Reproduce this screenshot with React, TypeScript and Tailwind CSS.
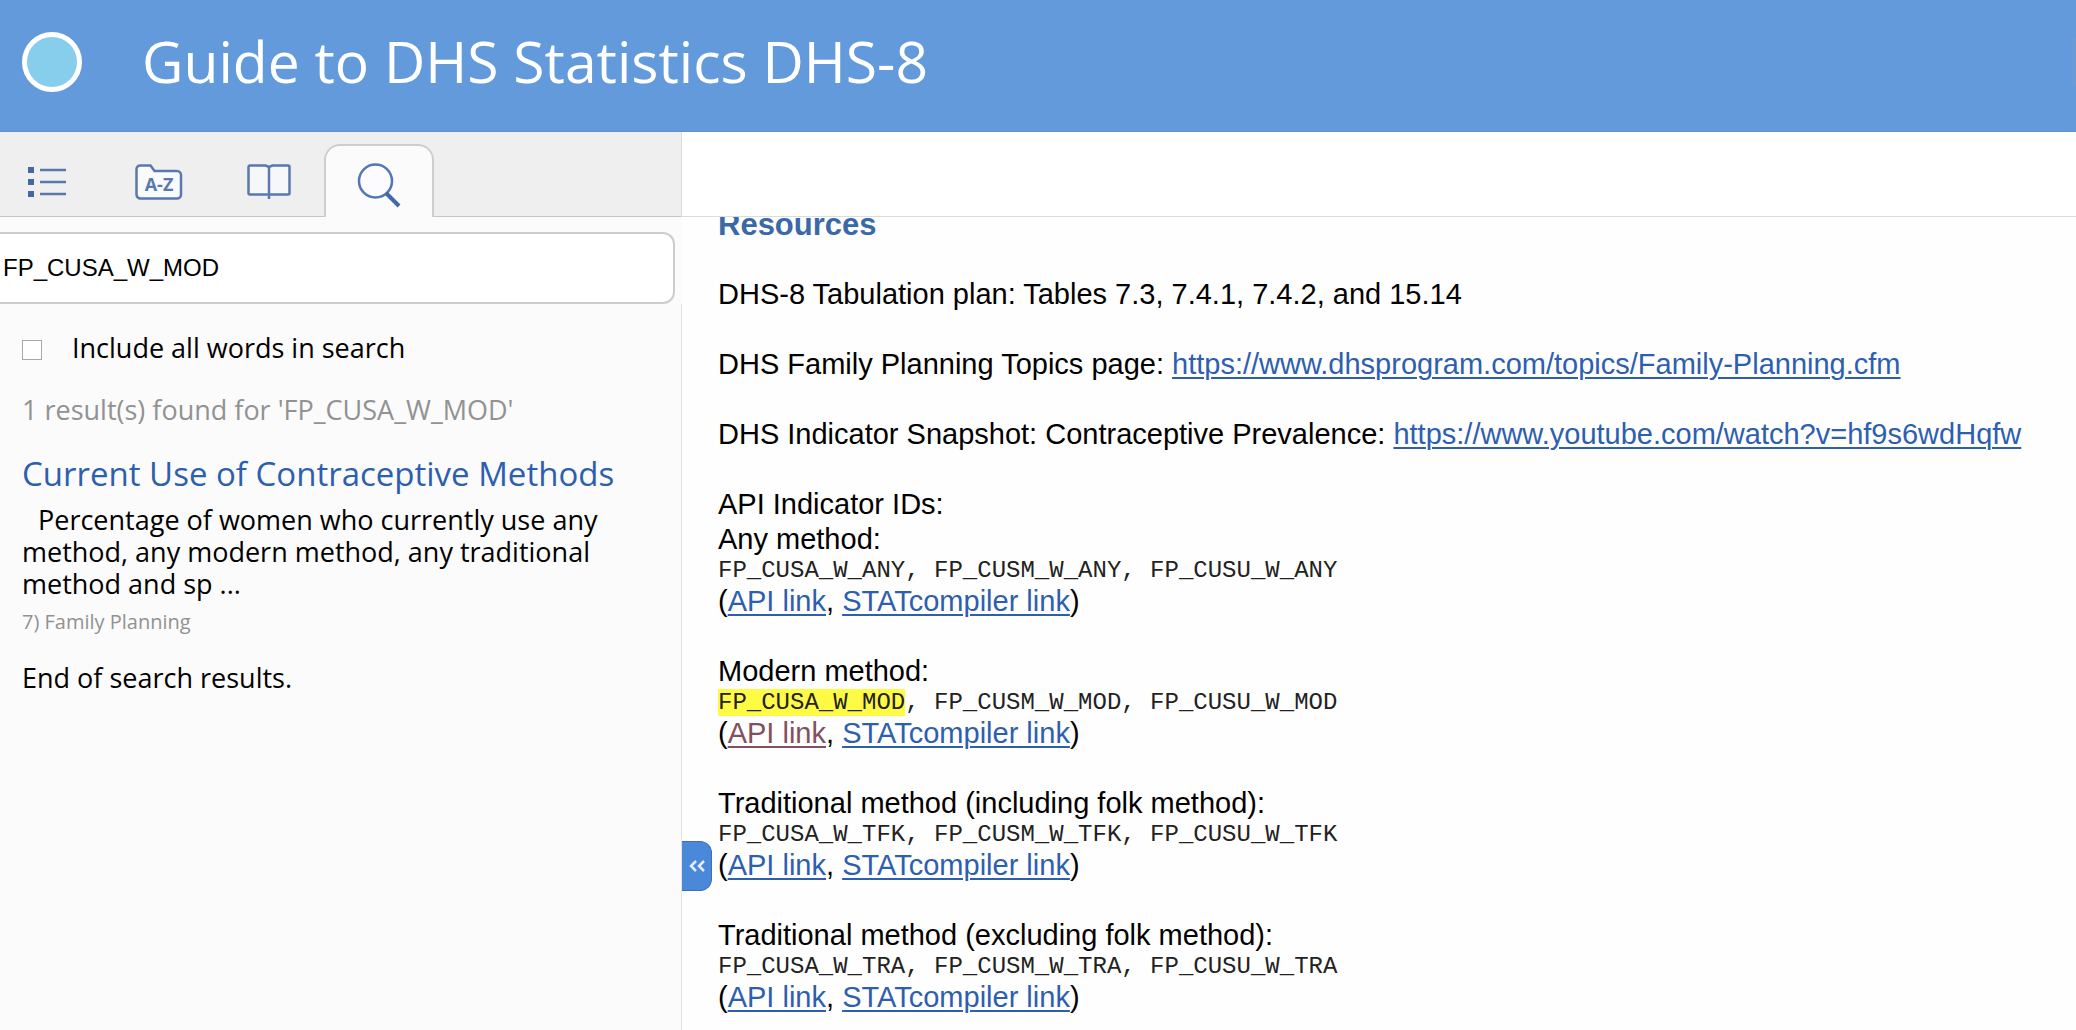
import React from 'react';

const groups = [
  { title: 'Any method:', suffix: 'ANY' },
  { title: 'Modern method:', suffix: 'MOD', highlighted: true, visited: true },
  { title: 'Traditional method (including folk method):', suffix: 'TFK' },
  { title: 'Traditional method (excluding folk method):', suffix: 'TRA' },
];

function ContentsIcon() {
  return (
    <svg width="42" height="36" viewBox="0 0 42 36" aria-hidden="true">
      <g fill="#4468a4">
        <rect x="2" y="3" width="6" height="6" />
        <rect x="2" y="15" width="6" height="6" />
        <rect x="2" y="27" width="6" height="6" />
      </g>
      <path d="M14 6h26M14 18h26M14 30h26" stroke="#5878ae" strokeWidth="2.500" />
    </svg>
  );
}

function IndexIcon() {
  return (
    <svg width="48" height="36" viewBox="0 0 48 36" aria-hidden="true">
      <path
        d="M5 1.500h10.500l4 5.500H42a4 4 0 0 1 4 4v19.500a4 4 0 0 1-4 4H5.500a4 4 0 0 1-4-4V5a3.500 3.500 0 0 1 3.500-3.500Z"
        fill="#f8fafc"
        stroke="#5878ae"
        strokeWidth="2.500"
      />
      <text x="24" y="27" textAnchor="middle" fontSize="18" fontWeight="700" fill="#5878ae" fontFamily="Open Sans, sans-serif">
        A-Z
      </text>
    </svg>
  );
}

function GlossaryIcon() {
  return (
    <svg width="44" height="36" viewBox="0 0 44 36" aria-hidden="true">
      <path
        d="M3 1.500h15.500l3.500 1.500 3.500-1.500H41a1.500 1.500 0 0 1 1.500 1.500v26a1.500 1.500 0 0 1-1.500 1.500H3A1.500 1.500 0 0 1 1.500 29V3A1.500 1.500 0 0 1 3 1.500Z"
        fill="#f5f7f9"
        stroke="#5878ae"
        strokeWidth="2.500"
      />
      <path d="M22 3v32" stroke="#5878ae" strokeWidth="2.500" />
    </svg>
  );
}

function SearchIcon() {
  return (
    <svg width="44" height="46" viewBox="0 0 44 46" aria-hidden="true">
      <circle cx="18.500" cy="18" r="16.500" fill="#fcfcfe" stroke="#5476b4" strokeWidth="2.500" />
      <path d="M29 30l13 13" stroke="#3f69a8" strokeWidth="4" />
    </svg>
  );
}

function TextLink({ visited, children }: { visited?: boolean; children: React.ReactNode }) {
  return (
    <a
      href="#"
      className={
        visited
          ? 'text-[#82505e] underline decoration-2 underline-offset-3'
          : 'text-[#2d5fae] underline decoration-2 underline-offset-3'
      }
    >
      {children}
    </a>
  );
}

export default function App() {
  return (
    <div className="flex h-screen flex-col overflow-hidden bg-white font-['Open_Sans','Trebuchet_MS',sans-serif] font-medium text-black">
      <header className="flex h-[132px] shrink-0 items-center border-b border-[#5f93cc] bg-[#629adc] pb-2 pl-[22px]">
        <div className="size-[60px] shrink-0 rounded-full border-[5px] border-white bg-[#87cdec]" />
        <h1 className="ml-[60px] flex-1 text-[57px] leading-none font-medium whitespace-nowrap text-white">
          Guide to DHS Statistics DHS-8
        </h1>
        <div className="h-12 w-1 bg-[#6c9bd4]" />
      </header>

      <div className="flex min-h-0 flex-1">
        <aside className="flex w-[682px] shrink-0 flex-col bg-[#fbfbfb]">
          <nav className="flex h-[85px] shrink-0 items-end border-r border-r-[#dcdcdc] bg-[#efefef]">
            <button aria-label="Contents" className="flex h-full flex-1 items-center border-b border-[#c6c6c6] pt-4 pl-[26px]">
              <ContentsIcon />
            </button>
            <button aria-label="Index" className="flex h-full w-[110px] items-center justify-center border-b border-[#c6c6c6] pt-4">
              <IndexIcon />
            </button>
            <button aria-label="Glossary" className="flex h-full w-[110px] items-center justify-center border-b border-[#c6c6c6] pt-4">
              <GlossaryIcon />
            </button>
            <button
              aria-label="Search"
              className="flex h-[73px] w-[110px] items-center justify-center rounded-t-2xl border-x-2 border-t-2 border-[#cecece] bg-[#fbfbfb] pt-2"
            >
              <SearchIcon />
            </button>
            <div className="h-full w-[247px] border-b border-[#c6c6c6]" />
          </nav>

          <div className="shrink-0 pt-[15px] pr-[7px]">
            <input
              type="text"
              aria-label="Search"
              defaultValue="FP_CUSA_W_MOD"
              className="block h-[72px] w-full rounded-r-xl border-2 border-l-0 border-[#cdcdcd] bg-white pl-[3px] font-['Liberation_Sans',Arial,sans-serif] text-[24px] font-normal outline-none"
            />
          </div>

          <div className="flex-1 border-r border-[#e2e2e2] px-[22px] pt-7 text-[27px] leading-8">
            <label className="flex items-center gap-[30px]">
              <input type="checkbox" className="mt-1 size-5 appearance-none border border-[#a8a8a8] bg-white" />
              <span>Include all words in search</span>
            </label>
            <p className="mt-[30px] text-[#929292]">1 result(s) found for 'FP_CUSA_W_MOD'</p>
            <a href="#" className="mt-[26px] block text-[33px] leading-[44px] whitespace-nowrap text-[#2d5fae]">
              Current Use of Contraceptive Methods
            </a>
            <p className="mt-2 indent-4">
              Percentage of women who currently use any method, any modern method, any traditional method and sp ...
            </p>
            <p className="mt-2 text-[20px] leading-7 text-[#929292]">7) Family Planning</p>
            <p className="mt-[26px]">End of search results.</p>
          </div>
        </aside>

        <main className="relative flex min-w-0 flex-1 flex-col font-['Liberation_Sans',Arial,sans-serif] text-[29px] leading-[35px] font-normal whitespace-nowrap">
          <div className="h-[85px] shrink-0 border-b border-[#dcdcdc] bg-white" />
          <div className="min-h-0 flex-1 overflow-hidden bg-[#fefefe] pl-9">
            <div className="-mt-2.5 flex flex-col gap-[35px]">
              <h2 className="text-[31px] font-bold text-[#3a69a8]">Resources</h2>
              <p>DHS-8 Tabulation plan: Tables 7.3, 7.4.1, 7.4.2, and 15.14</p>
              <p>
                DHS Family Planning Topics page:{' '}
                <TextLink>https://www.dhsprogram.com/topics/Family-Planning.cfm</TextLink>
              </p>
              <p>
                DHS Indicator Snapshot: Contraceptive Prevalence:{' '}
                <TextLink>https://www.youtube.com/watch?v=hf9s6wdHqfw</TextLink>
              </p>
              {groups.map((g, i) => (
                <section key={g.suffix}>
                  {i === 0 && <p>API Indicator IDs:</p>}
                  <p>{g.title}</p>
                  <p className="font-['Liberation_Mono','Courier_New',monospace] text-[24px] leading-[27px] text-[#222]">
                    <span className={g.highlighted ? 'bg-[#fffb45]' : ''}>FP_CUSA_W_{g.suffix}</span>, FP_CUSM_W_{g.suffix},
                    {' '}FP_CUSU_W_{g.suffix}
                  </p>
                  <p>
                    (<TextLink visited={g.visited}>API link</TextLink>, <TextLink>STATcompiler link</TextLink>)
                  </p>
                </section>
              ))}
            </div>
          </div>
          <button
            aria-label="Hide navigation"
            className="absolute bottom-[139px] left-0 flex h-[50px] w-[30px] items-center justify-center rounded-r-xl border border-l-0 border-[#3d6fb5] bg-[#4a88d9]"
          >
            <svg width="18" height="14" viewBox="0 0 18 14" fill="none" stroke="#e4effb" strokeWidth="2.500" aria-hidden="true">
              <path d="M8 2L3 7l5 5M16 2l-5 5 5 5" />
            </svg>
          </button>
        </main>
      </div>
    </div>
  );
}
